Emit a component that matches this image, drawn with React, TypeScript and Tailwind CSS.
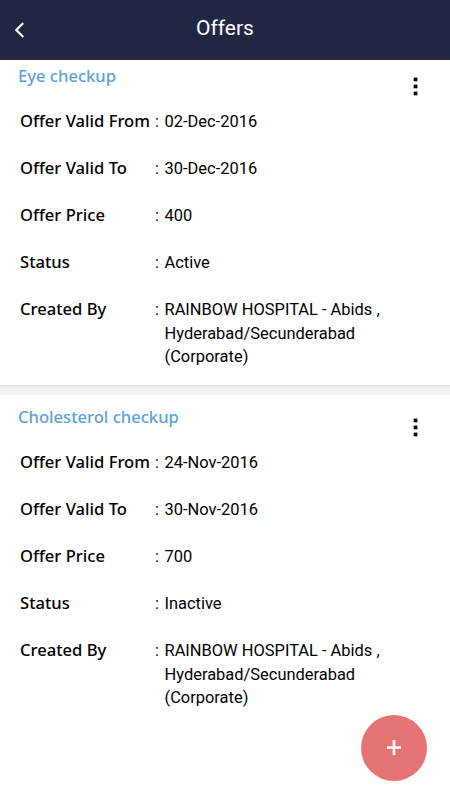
import React from "react";

interface Offer {
  title: string;
  validFrom: string;
  validTo: string;
  price: string;
  status: string;
  createdBy: string[];
}

const offers: Offer[] = [
  {
    title: "Eye checkup",
    validFrom: "02-Dec-2016",
    validTo: "30-Dec-2016",
    price: "400",
    status: "Active",
    createdBy: ["RAINBOW HOSPITAL - Abids ,", "Hyderabad/Secunderabad", "(Corporate)"],
  },
  {
    title: "Cholesterol checkup",
    validFrom: "24-Nov-2016",
    validTo: "30-Nov-2016",
    price: "700",
    status: "Inactive",
    createdBy: ["RAINBOW HOSPITAL - Abids ,", "Hyderabad/Secunderabad", "(Corporate)"],
  },
];

export default function App() {
  return (
    <div className="flex h-[800px] w-[450px] flex-col overflow-hidden bg-white font-['Roboto',sans-serif] text-black">
      <header className="z-10 grid h-[60px] shrink-0 grid-cols-[60px_1fr_60px] items-center bg-[#212743] pb-1 text-white">
        <button aria-label="Back" className="pt-[3px] pl-[14px]">
          <svg width="11" height="16" viewBox="0 0 11 16" fill="none">
            <path d="M9.3 1 2.3 8l7 7" stroke="currentColor" strokeWidth="2.2" />
          </svg>
        </button>
        <h1 className="text-center text-[21px] leading-7">Offers</h1>
      </header>

      {/* The list is scrolled slightly under the header */}
      <main className="-mt-1.5 flex flex-col">
        {offers.map((offer, index) => (
          <React.Fragment key={offer.title}>
            {index > 0 && (
              <div className="h-[10px] bg-[#f2f2f2] bg-linear-to-b from-[#e2e2e2] to-[#f2f2f2] to-35%" />
            )}
            <OfferCard offer={offer} />
          </React.Fragment>
        ))}
      </main>

      <button
        aria-label="Add offer"
        className="absolute top-[714.5px] left-[361px] flex size-[66px] items-center justify-center rounded-full bg-[#e57373] text-white"
      >
        <svg width="14" height="15" viewBox="0 0 14 15">
          <path d="M7 0v15M0 7.5h14" stroke="currentColor" strokeWidth="2.6" />
        </svg>
      </button>
    </div>
  );
}

function OfferCard({ offer }: { offer: Offer }) {
  return (
    <section className="h-[331px] pt-1.5 pl-[18px]">
      <div className="flex h-[38px] justify-between pr-[32px]">
        <h2 className="pt-1 font-['Noto_Sans',sans-serif] text-[16.6px] leading-6 font-medium text-[#5aa2dc]">
          {offer.title}
        </h2>
        <button aria-label="More options" className="flex items-start pt-[17px]">
          <svg width="5" height="19" viewBox="0 0 5 19" fill="currentColor">
            <rect x="0.7" y="0.6" width="3.7" height="3.7" />
            <rect x="0.7" y="7.6" width="3.7" height="3.7" />
            <rect x="0.7" y="14.6" width="3.7" height="3.7" />
          </svg>
        </button>
      </div>
      <dl className="flex flex-col gap-[23px] pt-3 pl-[2px]">
        <OfferRow label="Offer Valid From" lines={[offer.validFrom]} />
        <OfferRow label="Offer Valid To" lines={[offer.validTo]} />
        <OfferRow label="Offer Price" lines={[offer.price]} />
        <OfferRow label="Status" lines={[offer.status]} />
        <OfferRow label="Created By" lines={offer.createdBy} />
      </dl>
    </section>
  );
}

function OfferRow({ label, lines }: { label: string; lines: string[] }) {
  return (
    <div className="grid min-h-6 grid-cols-[135px_9.5px_1fr] text-[16.45px] leading-[23.6px]">
      <dt className="font-['Noto_Sans',sans-serif] text-[16.6px] leading-[21.5px] font-medium whitespace-nowrap">
        {label}
      </dt>
      <span>:</span>
      <dd>
        {lines.map((line) => (
          <div key={line}>{line}</div>
        ))}
      </dd>
    </div>
  );
}
